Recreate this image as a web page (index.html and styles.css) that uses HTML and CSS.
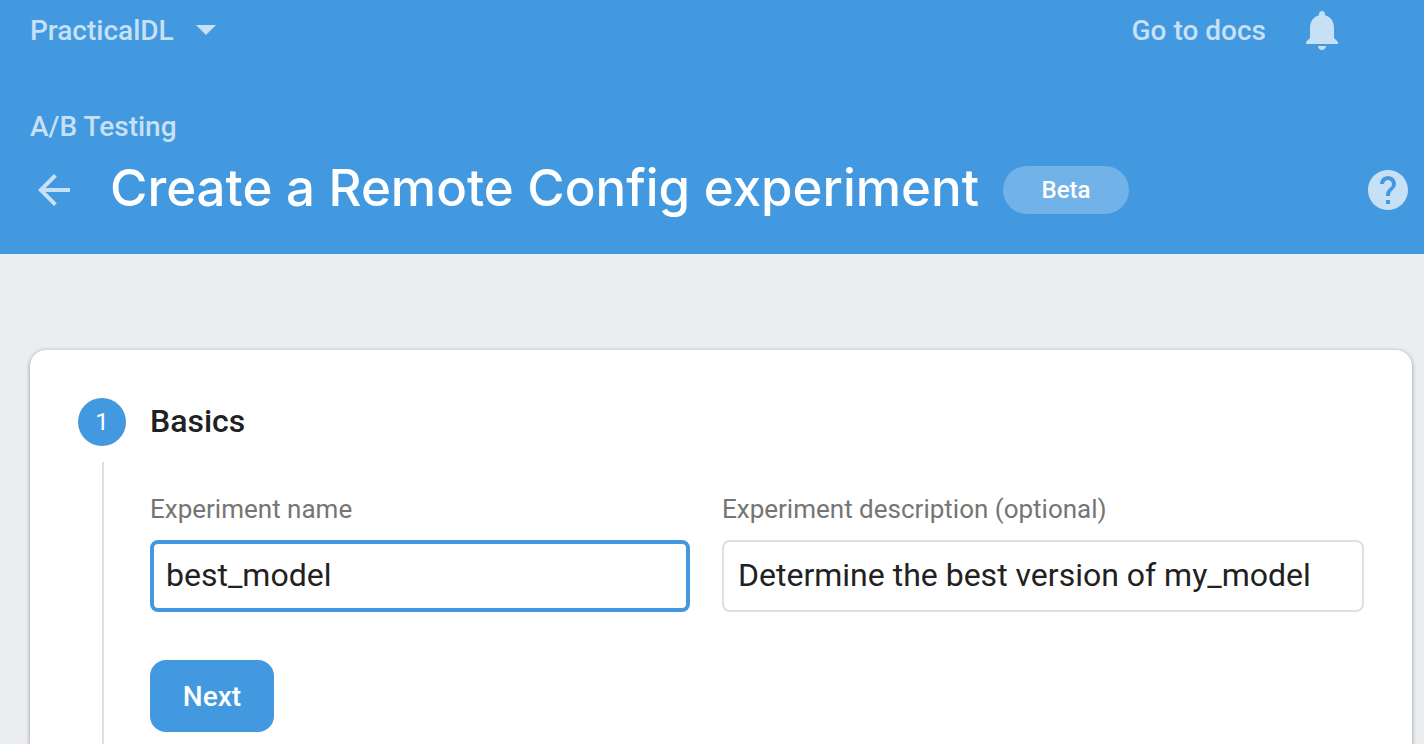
FILE: index.html
```html
<!DOCTYPE html>
<html lang="en">
<head>
<meta charset="utf-8">
<title>Create a Remote Config experiment</title>
<link rel="stylesheet" href="styles.css">
</head>
<body>
<header class="header">
  <div class="topbar">
    <button class="project" type="button">PracticalDL
      <svg class="caret" viewBox="0 0 20 10" aria-hidden="true"><path d="M0 0h20L10 10z"/></svg>
    </button>
    <nav class="tools">
      <a class="docs" href="#">Go to docs</a>
      <button class="icon-button" type="button" aria-label="Notifications">
        <svg class="bell" viewBox="4 2 16 20" aria-hidden="true"><path d="M12 22c1.1 0 2-.9 2-2h-4c0 1.1.9 2 2 2zm6-6v-5c0-3.070-1.630-5.640-4.500-6.320V4c0-.83-.67-1.500-1.500-1.500s-1.500.67-1.500 1.500v.68C7.640 5.360 6 7.920 6 11v5l-2 2v1h16v-1l-2-2z"/></svg>
      </button>
    </nav>
  </div>
  <a class="crumb" href="#">A/B Testing</a>
  <div class="title-row">
    <button class="icon-button back" type="button" aria-label="Back">
      <svg class="arrow" viewBox="4 4 16 16" aria-hidden="true"><path d="M20 11H7.830l5.590-5.590L12 4l-8 8 8 8 1.410-1.410L7.830 13H20v-2z"/></svg>
    </button>
    <h1 class="title">Create a Remote Config experiment</h1>
    <span class="badge">Beta</span>
    <button class="icon-button help" type="button" aria-label="Help">
      <svg class="help-icon" viewBox="2 2 20 20" aria-hidden="true"><path d="M12 2C6.480 2 2 6.480 2 12s4.480 10 10 10 10-4.480 10-10S17.520 2 12 2zm1 17h-2v-2h2v2zm2.070-7.750l-.9.920C13.450 12.900 13 13.500 13 15h-2v-.5c0-1.100.45-2.100 1.170-2.830l1.240-1.260c.37-.36.59-.86.59-1.410 0-1.100-.9-2-2-2s-2 .9-2 2H8c0-2.210 1.790-4 4-4s4 1.790 4 4c0 .88-.36 1.680-.93 2.250z"/></svg>
    </button>
  </div>
</header>
<main class="main">
  <section class="card">
    <div class="step-head">
      <span class="step-number">1</span>
      <h2 class="step-title">Basics</h2>
    </div>
    <form class="step-body">
      <div class="fields">
        <div class="field">
          <label class="label" for="name">Experiment name</label>
          <input class="input input-active" id="name" type="text" value="best_model">
        </div>
        <div class="field">
          <label class="label" for="description">Experiment description (optional)</label>
          <input class="input" id="description" type="text" value="Determine the best version of my_model">
        </div>
      </div>
      <button class="next" type="button">Next</button>
    </form>
  </section>
</main>
</body>
</html>
```
FILE: styles.css
```css
* {
  box-sizing: border-box;
}

body {
  display: flex;
  flex-direction: column;
  margin: 0;
  min-height: 100vh;
  background: #ebeef1;
  color: #212121;
  font-family: Roboto, "Liberation Sans", sans-serif;
}

button {
  border: 0;
  background: none;
  padding: 0;
  color: inherit;
  font: inherit;
}

svg {
  display: block;
  fill: currentColor;
}

.header {
  padding: 8px 16px 34px 30px;
  background: #4299e0;
  color: #c6e0f5;
}

.topbar {
  display: flex;
  align-items: center;
  justify-content: space-between;
  height: 44px;
  margin-right: 70px;
  font-size: 28px;
  font-weight: 500;
}

.project {
  display: flex;
  align-items: center;
  gap: 22px;
}

.caret {
  width: 20px;
  height: 10px;
}

.tools {
  display: flex;
  align-items: center;
  gap: 40px;
}

.docs,
.crumb {
  color: inherit;
  text-decoration: none;
}

.bell {
  width: 32px;
  height: 40px;
}

.crumb {
  display: block;
  margin-top: 58px;
  font-size: 28px;
  font-weight: 500;
  line-height: 34px;
}

.title-row {
  display: flex;
  align-items: center;
  height: 60px;
  margin-top: 16px;
}

.back {
  padding: 0 8px;
}

.arrow {
  width: 32px;
  height: 32px;
}

.title {
  margin: 0 0 0 32px;
  padding-bottom: 4px;
  color: #fff;
  font-family: Inter, Roboto, sans-serif;
  font-size: 51px;
  font-weight: 500;
  line-height: 56px;
  white-space: nowrap;
}

.badge {
  min-width: 126px;
  margin-left: 24px;
  border-radius: 24px;
  background: #71b2e8;
  color: #fff;
  font-size: 24px;
  font-weight: 500;
  line-height: 48px;
  text-align: center;
}

.help {
  margin-left: auto;
}

.help-icon {
  width: 40px;
  height: 40px;
}

.main {
  display: flex;
  flex: 1;
  padding: 96px 12px 0 30px;
}

.card {
  display: flex;
  flex: 1;
  flex-direction: column;
  padding: 48px 48px 0;
  border-radius: 16px 16px 0 0;
  background: #fff;
  box-shadow: 0 1px 4px rgba(0, 0, 0, 0.4);
}

.step-head {
  display: flex;
  align-items: center;
  gap: 24px;
}

.step-number {
  width: 48px;
  border-radius: 50%;
  background: #4299e0;
  color: #fff;
  font-size: 24px;
  line-height: 48px;
  text-align: center;
}

.step-title {
  margin: 0;
  padding-bottom: 2px;
  font-size: 32px;
  font-weight: 500;
}

.step-body {
  flex: 1;
  margin: 16px 0 0 24px;
  padding: 32px 0 12px 46px;
  border-left: 2px solid #e0e0e0;
}

.fields {
  display: grid;
  grid-template-columns: 540fr 642fr;
  gap: 32px;
}

.label {
  display: block;
  margin-bottom: 16px;
  color: #757575;
  font-size: 26px;
  line-height: 30px;
}

.input {
  width: 100%;
  height: 72px;
  padding: 0 14px 2px;
  border: 2px solid #e0e0e0;
  border-radius: 8px;
  outline: 0;
  background: #fff;
  color: #212121;
  font: 32px Roboto, "Liberation Sans", sans-serif;
}

.input-active {
  padding: 0 12px 2px;
  border: 4px solid #4299e0;
}

.next {
  display: block;
  min-width: 124px;
  margin-top: 48px;
  padding-top: 2px;
  border-radius: 16px;
  background: #4299e0;
  color: #fff;
  font-size: 28px;
  font-weight: 500;
  line-height: 70px;
}
```
